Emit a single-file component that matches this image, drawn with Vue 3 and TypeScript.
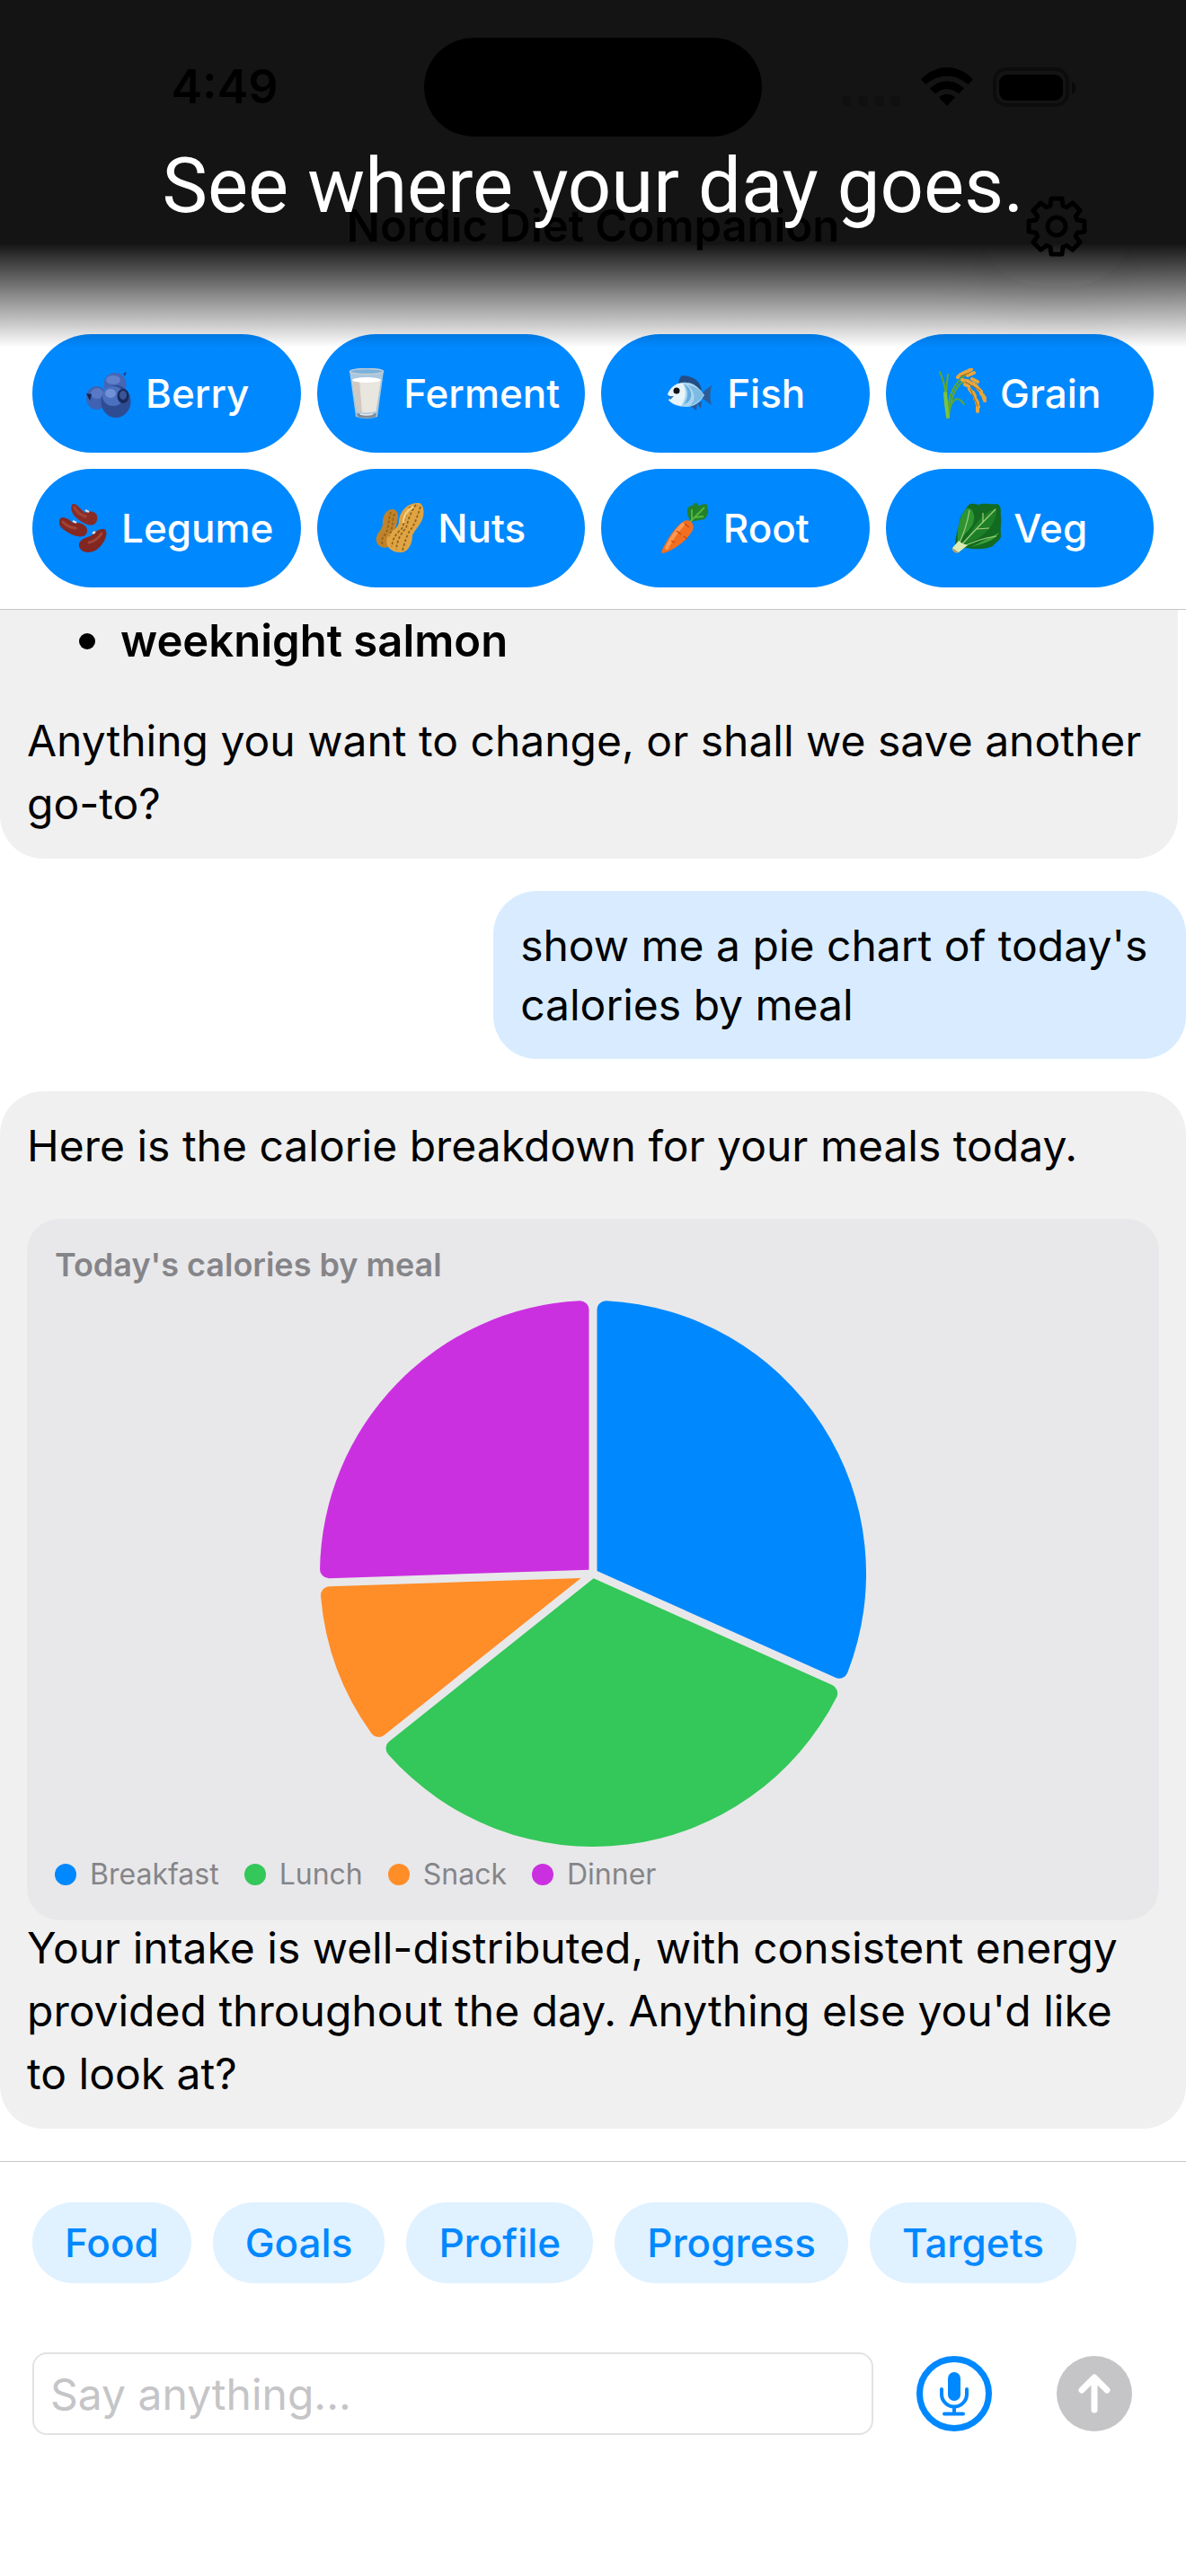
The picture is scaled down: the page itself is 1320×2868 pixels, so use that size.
<script setup lang="ts">
import { ref } from 'vue'

interface Slice {
  label: string
  color: string
  start: number
  end: number
}

const categories: string[] = ['Berry', 'Ferment', 'Fish', 'Grain', 'Legume', 'Nuts', 'Root', 'Veg']
const shortcuts: string[] = ['Food', 'Goals', 'Profile', 'Progress', 'Targets']
const draft = ref('')

const slices: Slice[] = [
  { label: 'Breakfast', color: '#0088ff', start: 0, end: 114.1 },
  { label: 'Lunch', color: '#34c759', start: 114.1, end: 231.4 },
  { label: 'Snack', color: '#ff8d28', start: 231.4, end: 268.1 },
  { label: 'Dinner', color: '#cb30e0', start: 268.1, end: 360 },
]

const rad = (deg: number): number => (deg * Math.PI) / 180

/** Sector with an even gap on both straight sides and rounded outer corners. */
function slicePath(s: Slice): string {
  const R = 304
  const inset = 4.5
  const corner = 10
  const a = rad(s.start)
  const b = rad(s.end)
  const at = (angle: number, along: number, side: number): string => {
    const x = R + along * Math.sin(angle) + side * Math.cos(angle)
    const y = R - along * Math.cos(angle) + side * Math.sin(angle)
    return `${x.toFixed(2)} ${y.toFixed(2)}`
  }
  const half = (b - a) / 2
  const apex = at(a + half, inset / Math.sin(half), 0)
  const phi = Math.asin((inset + corner) / (R - corner))
  const edge = (R - corner) * Math.cos(phi)
  return [
    `M${apex}`,
    `L${at(a, edge, inset)}`,
    `A${corner} ${corner} 0 0 1 ${at(a + phi, R, 0)}`,
    `A${R} ${R} 0 0 1 ${at(b - phi, R, 0)}`,
    `A${corner} ${corner} 0 0 1 ${at(b, edge, -inset)}`,
    'Z',
  ].join('')
}

/** Eight-toothed outline centred on 0,0. */
function gearPath(): string {
  const pts: string[] = []
  for (let i = 0; i < 8; i++) {
    const c = i * 45
    const corners: [number, number][] = [[-17, 24], [-11, 31.5], [11, 31.5], [17, 24]]
    for (const [off, r] of corners) {
      const t = rad(c + off)
      pts.push(`${(r * Math.sin(t)).toFixed(2)} ${(-r * Math.cos(t)).toFixed(2)}`)
    }
  }
  return `M${pts.join('L')}Z`
}
</script>

<template>
  <main class="app">
    <header class="top">
      <div class="status">
        <span class="time">4:49</span>
        <span class="island"></span>
        <div class="indicators">
          <svg width="66" height="44" viewBox="0 0 66 44" aria-hidden="true">
            <g opacity=".2">
              <rect v-for="n in 4" :key="n" :x="(n - 1) * 18" y="32" width="11" height="11" rx="4" />
            </g>
          </svg>
          <svg width="58" height="44" viewBox="0 0 58 44" aria-hidden="true">
            <path d="M0 13.500C16-4.500 42-4.500 58 13.500L52.500 19C39 6.500 19 6.500 5.500 19Z" />
            <path d="M10 23.500C21 12.500 37 12.500 48 23.500L42 29.500C34 22.500 24 22.500 16 29.500Z" />
            <path d="M20 33.500C25 28.500 33 28.500 38 33.500L29 43Z" />
          </svg>
          <svg width="94" height="44" viewBox="0 0 94 44" aria-hidden="true">
            <rect x="2" y="2" width="81" height="40" rx="13" fill="none" stroke="#000" stroke-width="4" opacity=".4" />
            <rect x="7" y="8" width="71" height="29" rx="9" />
            <path d="M88 16C94 18 94 28 88 30Z" opacity=".5" />
          </svg>
        </div>
      </div>
      <div class="nav">
        <h1>Nordic Diet Companion</h1>
        <button class="settings" type="button" aria-label="Settings">
          <svg width="70" height="70" viewBox="-35 -35 70 70" fill="none" stroke="#000" stroke-linejoin="round">
            <path :d="gearPath()" stroke-width="5" />
            <circle r="10" stroke-width="5" />
          </svg>
        </button>
      </div>
      <div class="categories">
        <button v-for="name in categories" :key="name" class="category" type="button">
          <svg width="56" height="56" viewBox="0 0 56 56" aria-hidden="true">
            <g v-if="name === 'Berry'">
              <ellipse cx="35" cy="18" rx="12.500" ry="13" fill="#4566b4" />
              <ellipse cx="33" cy="13" rx="8" ry="5" fill="#6080cc" />
              <ellipse cx="14.500" cy="33" rx="11.500" ry="13" fill="#3f62b2" />
              <ellipse cx="15" cy="28" rx="7" ry="6" fill="#5878c6" />
              <path d="M3 28L9 29L7 36Z" fill="#142350" />
              <ellipse cx="36" cy="37" rx="16.500" ry="18" fill="#2e4c93" />
              <ellipse cx="33" cy="31" rx="12" ry="11" fill="#4c70c0" />
              <ellipse cx="30" cy="28" rx="6" ry="5" fill="#7090d8" />
              <ellipse cx="44" cy="31" rx="6.500" ry="8" fill="#182a5c" />
              <ellipse cx="44" cy="30" rx="4" ry="5" fill="#3a5596" />
              <path d="M44 6L48 4L46 9Z" fill="#23407e" />
            </g>
            <g v-else-if="name === 'Ferment'">
              <path d="M9 3L16 54Q28 58 40 54L47 3Z" fill="#a9c7dd" />
              <path d="M12 13L17.500 48Q28 51 38.500 48L44 13Z" fill="#e9e5df" />
              <path d="M12 13L17.500 48Q21 50 23 49L20 14Z" fill="#cfc9c2" />
              <ellipse cx="28" cy="13" rx="16" ry="3" fill="#fff" />
              <ellipse cx="28" cy="3.500" rx="18.500" ry="3" fill="#79b2dc" stroke="#c4cdd4" stroke-width="1.500" />
              <path d="M17 50Q28 54 39 50L38 54Q28 57 18 54Z" fill="#7e8b96" />
              <path d="M21 51Q28 53 35 51" stroke="#e5eaee" stroke-width="1.500" fill="none" />
            </g>
            <g v-else-if="name === 'Fish'">
              <path d="M15 18C16 11 17 9 20 8C30 9 39 12 41 25Z" fill="#244d85" />
              <path d="M40 28L52 19C50 28 50 35 52 41L41 33Z" fill="#2c5d99" />
              <path d="M27 41L35 47L36 39L40 45L41 37Z" fill="#2c5a94" />
              <path d="M3 29C8 18 17 15 24 16C33 16 40 24 44 30C39 38 33 43 24 43C15 43 7 40 4 35L8 33Z" fill="#a7d5f1" />
              <path d="M3 29C7 20 14 16 20 17C25 25 23 35 18 42C10 40 6 38 4 35L8 33Z" fill="#e8f4fb" />
              <path d="M21 18C27 24 26 34 21 40C32 37 32 22 21 18Z" fill="#64aadd" />
              <path d="M26 19Q37 20 43 30Q38 38 28 42Q38 31 26 19Z" fill="#7dbbe5" />
              <circle cx="13" cy="25" r="3.500" fill="#101418" />
              <path d="M4 31L10 31L6 35Z" fill="#2f76bd" />
            </g>
            <g v-else-if="name === 'Grain'" fill="none" stroke-linecap="round">
              <path d="M10 55C10 35 9 20 2 4M10 53C8 34 9 20 11 7M12 53C9 30 20 14 34 5M12 53C14 34 20 16 33 13M12 48C16 33 22 30 29 40" stroke="#5da92e" stroke-width="2" />
              <path d="M8 28Q9 42 11 54" stroke="#7cc33c" stroke-width="4" />
              <path d="M22 10L25 7M27 6L31 4M32 4L37 1M33 8L40 5M27 13L31 14M33 14L37 17M39 17L43 20M44 22L48 26M48 28L52 33M30 18L34 20M35 23L38 27M39 27L41 31M41 33L44 38M43 38L45 43M44 43L44 48M38 12L44 15M50 30L52 36" stroke="#e9a63a" stroke-width="4" />
              <path d="M25 9L35 5M30 15L47 25M36 23L44 42" stroke="#a56810" stroke-width="1" />
            </g>
            <g v-else-if="name === 'Legume'">
              <path d="M14 2C18-2 22 6 29 11C34 8 44 9 42 19C40 28 30 25 22 19C14 13 12 7 14 2Z" fill="#8a2c26" />
              <path d="M0 20C1 13 9 16 15 22C22 21 32 24 31 32C29 40 18 38 10 33C3 29-1 26 0 20Z" fill="#842822" />
              <path d="M50 29C55 31 52 42 45 49C38 57 24 57 22 48C21 41 29 39 34 37C39 35 42 28 50 29Z" fill="#812620" />
              <path d="M17 5Q20 12 29 15M4 21Q9 27 18 28M47 34Q42 42 33 44" stroke="#9f4438" stroke-width="3" fill="none" stroke-linecap="round" />
              <path d="M29 8L33 10M15 20L19 22M37 34L40 32" stroke="#f0dcd4" stroke-width="2.500" />
            </g>
            <g v-else-if="name === 'Nuts'">
              <path d="M20 7C27 9 25 18 23 25C21 31 21 35 20 42C17 52 4 52 1 43C-1 35 7 31 8 24C7 15 12 6 20 7Z" fill="#bf832b" />
              <path d="M49 0C54 3 54 9 53 15C51 24 44 29 41 36C41 47 35 56 27 55C16 55 10 47 13 38C16 31 24 30 26 22C26 10 35-1 49 0Z" fill="#dfa544" />
              <path d="M45 2C38 12 36 20 34 28C29 33 24 40 23 52M50 4C46 17 43 25 38 31C34 38 32 45 30 53M39 4C32 12 33 22 29 29C23 34 19 39 18 49M17 10C14 18 15 28 11 35C6 39 7 43 8 48M21 12C18 20 20 27 15 37" stroke="#96611a" stroke-width="1.800" stroke-dasharray="3 2" fill="none" />
              <path d="M42 4C35 8 31 15 31 22" stroke="#f4cf82" stroke-width="2.500" fill="none" />
            </g>
            <g v-else-if="name === 'Root'">
              <path d="M33 21C25 8 30 2 35 3C37-2 41 0 42 4C47-1 53 1 51 5C54 10 51 15 48 18C42 20 38 19 33 21Z" fill="#23812c" />
              <path d="M32 21L48 5M34 18L34 7M37 16L47 15" stroke="#55b83d" stroke-width="1.800" fill="none" />
              <path d="M24 21C30 16 38 22 35 30C29 42 14 52 2 56C0 56 0 54 1 52C7 40 15 27 24 21Z" fill="#f26f20" />
              <path d="M24 24C16 32 11 40 6 50" stroke="#ff9a52" stroke-width="4" fill="none" stroke-linecap="round" />
              <path d="M26 23L31 27M17 31L22 35M25 37L29 40M11 42L15 44" stroke="#c04a10" stroke-width="1.300" />
            </g>
            <g v-else>
              <path d="M17 5C20-1 26 1 30 2C36-1 44 2 50 1C57 3 54 10 55 15C56 22 54 27 55 35C56 41 50 43 46 48C38 52 27 52 16 50L8 52L4 46C5 34 8 27 9 20C10 14 14 10 17 5Z" fill="#126b20" />
              <path d="M17 6C24 4 28 16 23 25C18 33 12 36 7 46C6 31 8 14 17 6Z" fill="#2e9432" />
              <path d="M50 5C51 20 42 32 27 41L12 48C20 37 27 15 50 5Z" fill="#1d8028" />
              <path d="M53 33C47 43 35 45 22 49Z" fill="#3ba13a" />
              <path d="M49 7Q31 25 6 52M20 8Q17 28 6 51M50 37Q31 39 6 52M35 21L35 11M28 29L42 28" stroke="#a5d07c" stroke-width="1.200" fill="none" />
              <path d="M8 42L12 45L18 47L8 55Q1 56 1 50Z" fill="#dcecb4" />
              <path d="M1 50L8 55Q3 58 1 50Z" fill="#b39a6c" />
            </g>
          </svg>
          <span>{{ name }}</span>
        </button>
      </div>
      <div class="caption">
        <p>See where your day goes.</p>
      </div>
    </header>

    <section class="chat">
      <article class="bubble reply cut">
        <ul>
          <li>weeknight salmon</li>
        </ul>
        <p>Anything you want to change, or shall we save another go-to?</p>
      </article>

      <article class="bubble mine">
        <p>show me a pie chart of today's calories by meal</p>
      </article>

      <article class="bubble reply">
        <p>Here is the calorie breakdown for your meals today.</p>
        <figure class="card">
          <figcaption>Today's calories by meal</figcaption>
          <svg class="pie" viewBox="0 0 608 608" role="img" aria-label="Today's calories by meal">
            <path v-for="s in slices" :key="s.label" :d="slicePath(s)" :fill="s.color" />
          </svg>
          <ul class="legend">
            <li v-for="s in slices" :key="s.label">
              <i :style="{ background: s.color }"></i>{{ s.label }}
            </li>
          </ul>
        </figure>
        <p>Your intake is well-distributed, with consistent energy provided throughout the day. Anything else you'd like to look at?</p>
      </article>
    </section>

    <footer class="composer">
      <div class="chips">
        <button v-for="name in shortcuts" :key="name" class="chip" type="button">{{ name }}</button>
      </div>
      <form class="entry" @submit.prevent>
        <input v-model="draft" type="text" placeholder="Say anything..." aria-label="Message" />
        <button class="round mic" type="button" aria-label="Dictate">
          <svg width="84" height="84" viewBox="0 0 84 84" fill="none" stroke="#0088ff" stroke-linecap="round">
            <circle cx="42" cy="42" r="38.500" stroke-width="7" />
            <rect x="35" y="18" width="14" height="32" rx="7" fill="#0088ff" stroke="none" />
            <path d="M28 37V42.500A14 14 0 0 0 56 42.500V37M42 57V64M31 64.500H52" stroke-width="4" />
          </svg>
        </button>
        <button class="round" type="submit" aria-label="Send">
          <svg width="84" height="84" viewBox="0 0 84 84" fill="none" stroke="#fff" stroke-width="7" stroke-linecap="round" stroke-linejoin="round">
            <circle cx="42" cy="42" r="42" fill="#c5c5c7" stroke="none" />
            <path d="M42 60V25M28 38L42 24L56 38" />
          </svg>
        </button>
      </form>
    </footer>
  </main>
</template>

<style>
body {
  background: #fff;
}
</style>

<style scoped>
.app {
  color: #000;
  font-family: Inter, "Liberation Sans", sans-serif;
  font-size: 48px;
  line-height: 70px;
  overflow: hidden;
}

h1,
p,
ul,
figure {
  margin: 0;
  padding: 0;
}

ul {
  list-style: none;
}

button {
  border: 0;
  padding: 0;
  font: inherit;
  cursor: pointer;
}

svg {
  display: block;
}

.top {
  position: relative;
  border-bottom: 1px solid #c6c6c8;
  padding-bottom: 24px;
}

.status {
  display: grid;
  grid-template-columns: 1fr 376px 1fr;
  align-items: center;
  padding-top: 42px;
  height: 110px;
}

.time {
  justify-self: center;
  padding-left: 28px;
  font-size: 52px;
  font-weight: 600;
}

.island {
  height: 110px;
  border-radius: 55px;
  background: #000;
}

.indicators {
  display: flex;
  justify-self: end;
  gap: 22px;
  padding-right: 121px;
}

.nav {
  display: grid;
  grid-template-columns: 1fr auto 1fr;
  align-items: center;
  padding: 34px 60px 54px;
}

h1 {
  grid-column: 2;
  font-size: 49px;
  font-weight: 600;
}

.settings {
  display: grid;
  place-items: center;
  justify-self: end;
  width: 168px;
  height: 132px;
  border-radius: 66px;
  background: #fff;
  box-shadow: 0 12px 90px rgba(0, 0, 0, 0.08);
}

.categories {
  display: grid;
  grid-template-columns: repeat(4, 1fr);
  gap: 18px;
  padding: 0 36px;
}

.category {
  display: flex;
  align-items: center;
  justify-content: center;
  gap: 13px;
  height: 132px;
  border-radius: 66px;
  background: #0088ff;
  color: #fff;
  font-size: 44px;
  font-weight: 500;
}

.caption {
  position: absolute;
  inset: 0 0 auto;
  height: 387px;
  background: linear-gradient(rgba(0, 0, 0, 0.92) 70%, rgba(0, 0, 0, 0));
  color: #fff;
  pointer-events: none;
}

.caption p {
  padding-top: 157px;
  font-family: Roboto, Inter, sans-serif;
  font-size: 85px;
  line-height: 100px;
  text-align: center;
}

.chat {
  display: flex;
  flex-direction: column;
  gap: 36px;
  padding-bottom: 36px;
  border-bottom: 1px solid #c6c6c8;
}

.bubble {
  border-radius: 48px;
  padding: 26px 30px;
}

.reply {
  background: #f0f0f0;
}

.cut {
  margin-right: 9px;
  border-radius: 0 0 48px 48px;
  padding-top: 0;
}

.cut ul {
  margin-bottom: 41px;
}

.cut li {
  display: flex;
  align-items: center;
  gap: 28px;
  padding-left: 58px;
  font-size: 49px;
  font-weight: 600;
}

.cut li::before {
  content: "";
  width: 18px;
  height: 18px;
  border-radius: 50%;
  background: #000;
}

.mine {
  align-self: flex-end;
  box-sizing: border-box;
  max-width: 58.4%;
  padding: 28px 30px 27px;
  background: #d9ecff;
  line-height: 66px;
}

.card {
  margin: 46px 0 -4px;
  border-radius: 36px;
  padding: 29px 31px 31px;
  background: #e8e8ea;
  color: #858589;
}

figcaption {
  font-size: 36px;
  line-height: 44px;
  font-weight: 600;
}

.pie {
  width: 100%;
  max-width: 608px;
  margin: 18px auto 11px;
}

.legend {
  display: flex;
  gap: 28px;
  font-size: 32px;
  line-height: 40px;
}

.legend li {
  display: flex;
  align-items: center;
  gap: 15px;
}

.legend i {
  width: 24px;
  height: 24px;
  border-radius: 50%;
}

.composer {
  padding: 45px 36px 158px;
}

.chips {
  display: flex;
  gap: 24px;
}

.chip {
  height: 90px;
  border-radius: 45px;
  padding: 0 36px;
  background: #e0f1ff;
  color: #0088ff;
  font-size: 44px;
  font-weight: 500;
}

.entry {
  display: flex;
  align-items: center;
  margin-top: 77px;
  padding-right: 24px;
}

input {
  flex: 1;
  min-width: 0;
  box-sizing: border-box;
  height: 92px;
  border: 2px solid #e2e2e2;
  border-radius: 16px;
  padding: 0 18px;
  background: #fff;
  color: #000;
  font: inherit;
}

input::placeholder {
  color: #c5c5c7;
  opacity: 1;
}

.round {
  border-radius: 50%;
  background: none;
}

.mic {
  margin: 0 72px 0 48px;
}
</style>
